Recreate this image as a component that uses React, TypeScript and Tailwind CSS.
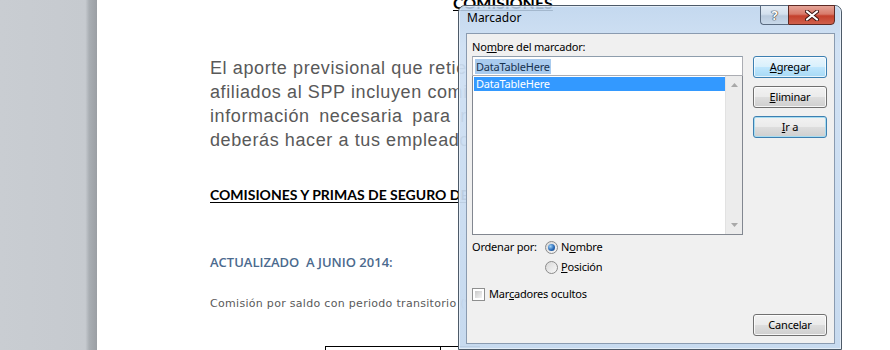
import React from "react";

const winBtn =
  "h-[22px] w-[74px] rounded-[3px] border flex items-center justify-center text-black";
const normalBg =
  "border-[#707070] bg-[linear-gradient(to_bottom,#f2f2f2_0%,#ebebeb_48%,#dddddd_52%,#cfcfcf_100%)] shadow-[inset_0_0_0_1px_rgba(255,255,255,0.8)]";
const hoverBg =
  "border-[#3c7fb1] bg-[linear-gradient(to_bottom,#eaf6fd_0%,#d9f0fc_48%,#bee6fd_52%,#a7d9f5_100%)] shadow-[inset_0_0_0_1px_rgba(255,255,255,0.7)]";
const focusBg =
  "border-[#3c7fb1] bg-[linear-gradient(to_bottom,#f2f2f2_0%,#ebebeb_48%,#dddddd_52%,#cfcfcf_100%)] shadow-[inset_0_0_0_1px_#a8dcf0]";

function Radio({ checked }: { checked?: boolean }) {
  return (
    <div className="w-[13px] h-[13px] rounded-full border border-[#8b8b8b] bg-[linear-gradient(135deg,#d8d8d8,#f8f8f8)] flex items-center justify-center">
      {checked && (
        <div className="w-[7px] h-[7px] rounded-full bg-[radial-gradient(circle_at_35%_35%,#9fd2f8_0%,#2a6bb8_55%,#123d78_100%)]" />
      )}
    </div>
  );
}

export default function App() {
  return (
    <div className="relative w-[890px] h-[350px] overflow-hidden flex bg-white">
      {/* left gray area */}
      <div className="w-[97px] h-full bg-[linear-gradient(to_right,#c9cdd2_0%,#c6cacf_88%,#a9aeb3_92%,#9b9fa4_100%)]" />
      {/* page */}
      <div className="flex-1 h-full bg-white pl-[113px] flex flex-col">
        <div className="ml-[243px] -mt-[6px] h-[17px] leading-[17px] text-[16px] font-bold underline font-['Lato',sans-serif] text-black whitespace-nowrap">
          COMISIONES
        </div>
        <div className="mt-[45px] font-['Liberation_Sans',Arial,sans-serif] text-[18px] leading-[24px] tracking-[0.6px] text-[#595959] whitespace-nowrap">
          <div>El aporte previsional que retienes a tus trabajadores</div>
          <div>afiliados al SPP incluyen comisiones y primas de seguro</div>
          <div className="[word-spacing:4px]">información necesaria para realizar los descuentos que</div>
          <div>deberás hacer a tus empleados.</div>
        </div>
        <div className="mt-[34px] h-[18px] leading-[18px] text-[14px] font-bold underline underline-offset-2 font-['Lato',sans-serif] text-black whitespace-nowrap">
          COMISIONES Y PRIMAS DE SEGURO DE LAS AFP
        </div>
        <div className="mt-[50px] h-[16px] leading-[16px] text-[13px] font-semibold font-['Open_Sans',sans-serif] text-[#4b6a8e] whitespace-pre">
          {"ACTUALIZADO  A JUNIO 2014:"}
        </div>
        <div className="mt-[27px] h-[14px] leading-[14px] text-[11px] tracking-[0.3px] font-['DejaVu_Sans',sans-serif] text-[#5a5a5a] whitespace-nowrap">
          Comisión por saldo con periodo transitorio (%)
        </div>
        <div className="mt-[35px] ml-[115px] flex">
          <div className="w-[115px] h-[10px] border-l border-t border-black" />
          <div className="w-[40px] h-[10px] border-l border-t border-black" />
        </div>
      </div>

      {/* dialog window */}
      <div className="absolute left-[458px] top-[5px] w-[384px] h-[345px] rounded-t-[7px] border border-[#4d5a68] bg-[linear-gradient(to_bottom,rgba(186,210,236,0.86)_0%,rgba(205,223,243,0.92)_12%,rgba(196,216,238,0.95)_100%)] font-['Noto_Sans',sans-serif]">
        <div className="absolute inset-0 rounded-t-[6px] border border-white/50 pointer-events-none" />
        {/* title */}
        <div className="absolute left-[8px] top-[4px] text-[12px] leading-[16px] text-black">Marcador</div>
        {/* caption buttons */}
        <div className="absolute left-[301px] -top-[1px] flex">
          <div className="w-[28px] h-[20px] rounded-bl-[4px] border border-[#5a6b80] border-r-0 bg-[linear-gradient(to_bottom,#e4edf6_0%,#d3e0ee_45%,#b9cadd_55%,#c9d9ea_100%)] flex items-center justify-center text-[13px] font-bold text-white [text-shadow:0_0_1px_#333,0_0_1px_#333,0_0_1px_#333] leading-none">
            ?
          </div>
          <div className="w-[47px] h-[20px] rounded-br-[4px] border border-[#5d2a24] bg-[linear-gradient(to_bottom,#e5a497_0%,#d87a6a_45%,#c4402c_55%,#d0604b_100%)] flex items-center justify-center">
            <svg width="14" height="11" viewBox="0 0 14 11">
              <path d="M2 1.5 L12 9.5 M12 1.5 L2 9.5" stroke="#3b1410" strokeWidth="4" strokeLinecap="round" />
              <path d="M2 1.5 L12 9.5 M12 1.5 L2 9.5" stroke="#ffffff" strokeWidth="2.2" strokeLinecap="round" />
            </svg>
          </div>
        </div>

        {/* client area */}
        <div className="absolute left-[7px] top-[27px] w-[369px] h-[311px] border border-[#8a9bb0] bg-[#f0f0f0] flex text-[11px] tracking-[-0.2px] text-black">
          {/* left column */}
          <div className="ml-[5px] w-[271px] flex flex-col">
            <div className="mt-[5px] h-[16px] leading-[16px]">
              No<u>m</u>bre del marcador:
            </div>
            <div className="mt-[1px] h-[20px] border border-[#abadb3] border-t-[#8e9dac] bg-white flex items-center pl-[2px]">
              <span className="bg-[#a9cbee] text-[#17324f] leading-[15px] px-[1px]">DataTableHere</span>
            </div>
            <div className="h-[159px] border border-[#828790] border-t-0 bg-white flex">
              <div className="flex-1 pt-[1px] pl-[1px]">
                <div className="h-[14px] leading-[14px] bg-[#3399ff] text-white pl-[2px]">DataTableHere</div>
              </div>
              <div className="w-[17px] h-full bg-[#ececec] border-l border-[#e2e2e2] flex flex-col items-center justify-between py-[7px]">
                <svg width="7" height="4" viewBox="0 0 7 4">
                  <path d="M0 4 L3.5 0 L7 4 Z" fill="#a8a8a8" />
                </svg>
                <svg width="7" height="4" viewBox="0 0 7 4">
                  <path d="M0 0 L3.5 4 L7 0 Z" fill="#a8a8a8" />
                </svg>
              </div>
            </div>
            <div className="mt-[4px] flex">
              <div className="w-[73px] shrink-0 h-[16px] leading-[16px]">Ordenar por:</div>
              <div className="flex flex-col gap-[4px]">
                <div className="h-[16px] flex items-center gap-[3px]">
                  <Radio checked />
                  <span className="leading-[16px]">
                    N<u>o</u>mbre
                  </span>
                </div>
                <div className="h-[16px] flex items-center gap-[3px]">
                  <Radio />
                  <span className="leading-[16px]">
                    <u>P</u>osición
                  </span>
                </div>
              </div>
            </div>
            <div className="mt-[11px] h-[16px] flex items-center gap-[4px]">
              <div className="w-[13px] h-[13px] border border-[#8e8f8f] bg-white p-[2px]">
                <div className="w-full h-full bg-[linear-gradient(135deg,#c9c9c9,#f4f4f4)]" />
              </div>
              <span className="leading-[16px]">
                Mar<u>c</u>adores ocultos
              </span>
            </div>
          </div>
          {/* right column */}
          <div className="ml-[10px] flex flex-col pt-[22px] pb-[7px]">
            <div className={`${winBtn} ${hoverBg}`}>
              <span>
                <u>A</u>gregar
              </span>
            </div>
            <div className={`${winBtn} ${normalBg} mt-[8px]`}>
              <span>
                <u>E</u>liminar
              </span>
            </div>
            <div className={`${winBtn} ${focusBg} mt-[8px]`}>
              <span>
                <u>I</u>r a
              </span>
            </div>
            <div className={`${winBtn} ${normalBg} mt-auto`}>
              <span>Cancelar</span>
            </div>
          </div>
        </div>
      </div>
    </div>
  );
}
